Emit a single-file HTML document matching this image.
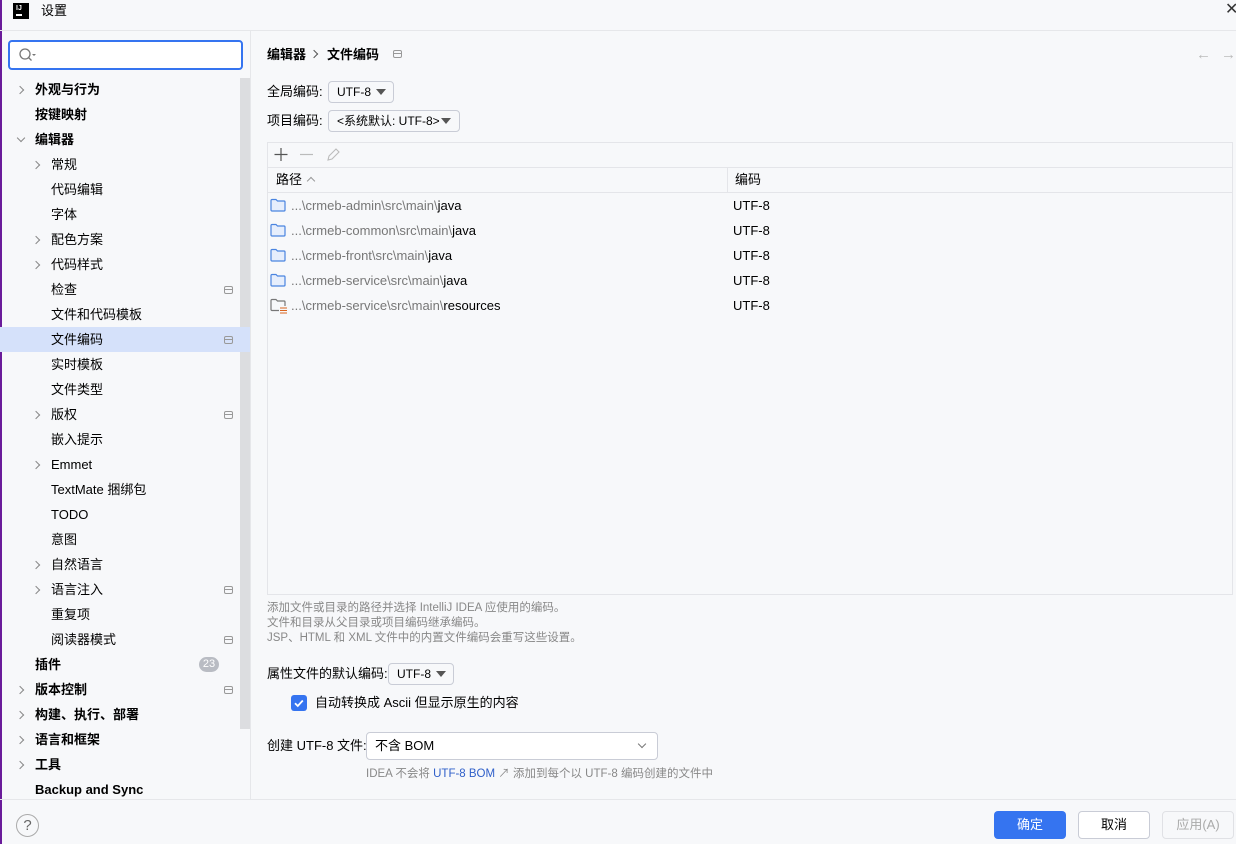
<!DOCTYPE html><html><head><meta charset="utf-8"><style>
*{box-sizing:border-box;margin:0;padding:0}
body{width:1236px;height:844px;background:#f7f8fa;font-family:"Liberation Sans","Noto Sans CJK SC",sans-serif;font-size:13px;color:#000;position:relative;overflow:hidden}
.a{position:absolute;white-space:nowrap;line-height:18px}
.b{font-weight:bold}
.chev{position:absolute;width:6px;height:6px;border-right:1.3px solid #888;border-bottom:1.3px solid #888}
.r{transform:rotate(-45deg)}
.d{transform:rotate(45deg)}
.pin{position:absolute;width:9px;height:8px;border:1px solid #999;border-radius:2px}
.pin:after{content:"";position:absolute;left:0;right:0;top:2px;border-top:1px solid #999}
.dd{position:absolute;height:22px;border:1px solid #c9ccd6;border-radius:4px;background:#f7f8fa;line-height:20px;padding-left:8px;font-size:12px}
.tri{position:absolute;width:0;height:0;border-left:5px solid transparent;border-right:5px solid transparent;border-top:6px solid #555;top:7px}
.g{color:#777}
.fo{position:absolute}
</style></head><body>
<div class="a" style="left:0;top:0;width:2px;height:844px;background:#6a1b9a"></div>
<div class="a" style="left:13px;top:3px;width:16px;height:16px;background:#000"><div style="position:absolute;left:3px;top:11px;width:6px;height:1.5px;background:#fff"></div><div style="position:absolute;left:3px;top:2px;color:#fff;font-size:7px;font-weight:bold;line-height:8px">IJ</div></div>
<div class="a" style="left:41px;top:2px;font-size:13px">设置</div>
<div class="a" style="left:1225px;top:1px;font-size:16px;color:#333">✕</div>
<div class="a" style="left:0;top:30px;width:1236px;height:1px;background:#e6e7ea"></div>
<div class="a" style="left:250px;top:30px;width:1px;height:769px;background:#e6e7ea"></div>
<div class="a" style="left:0;top:799px;width:1236px;height:1px;background:#e6e7ea"></div>
<div class="a" style="left:8px;top:40px;width:235px;height:30px;border:2px solid #3574f0;border-radius:4px;background:#fff"></div>
<svg class="a" style="left:18px;top:47px" width="20" height="16"><circle cx="7" cy="7" r="5" fill="none" stroke="#777" stroke-width="1.3"/><path d="M10.5 10.5l3 3" stroke="#777" stroke-width="1.3"/><path d="M14 7h4l-2 2z" fill="#777"/></svg>
<div class="a" style="left:240px;top:78px;width:10px;height:651px;background:#dcdde0"></div>
<div class="a" style="left:0;top:327px;background:#d5e1fa;width:250px;height:25px"></div>
<div class="chev r" style="left:17px;top:87px"></div><div class="a b" style="left:35px;top:81px">外观与行为</div>
<div class="a b" style="left:35px;top:106px">按键映射</div>
<div class="chev d" style="left:18px;top:135px"></div><div class="a b" style="left:35px;top:131px">编辑器</div>
<div class="chev r" style="left:33px;top:162px"></div><div class="a" style="left:51px;top:156px">常规</div>
<div class="a" style="left:51px;top:181px">代码编辑</div>
<div class="a" style="left:51px;top:206px">字体</div>
<div class="chev r" style="left:33px;top:237px"></div><div class="a" style="left:51px;top:231px">配色方案</div>
<div class="chev r" style="left:33px;top:262px"></div><div class="a" style="left:51px;top:256px">代码样式</div>
<div class="a" style="left:51px;top:281px">检查</div><div class="pin" style="left:224px;top:286px"></div>
<div class="a" style="left:51px;top:306px">文件和代码模板</div>
<div class="a" style="left:51px;top:331px">文件编码</div><div class="pin" style="left:224px;top:336px"></div>
<div class="a" style="left:51px;top:356px">实时模板</div>
<div class="a" style="left:51px;top:381px">文件类型</div>
<div class="chev r" style="left:33px;top:412px"></div><div class="a" style="left:51px;top:406px">版权</div><div class="pin" style="left:224px;top:411px"></div>
<div class="a" style="left:51px;top:431px">嵌入提示</div>
<div class="chev r" style="left:33px;top:462px"></div><div class="a" style="left:51px;top:456px">Emmet</div>
<div class="a" style="left:51px;top:481px">TextMate 捆绑包</div>
<div class="a" style="left:51px;top:506px">TODO</div>
<div class="a" style="left:51px;top:531px">意图</div>
<div class="chev r" style="left:33px;top:562px"></div><div class="a" style="left:51px;top:556px">自然语言</div>
<div class="chev r" style="left:33px;top:587px"></div><div class="a" style="left:51px;top:581px">语言注入</div><div class="pin" style="left:224px;top:586px"></div>
<div class="a" style="left:51px;top:606px">重复项</div>
<div class="a" style="left:51px;top:631px">阅读器模式</div><div class="pin" style="left:224px;top:636px"></div>
<div class="a b" style="left:35px;top:656px">插件</div><div class="a" style="left:199px;top:657px;width:20px;height:15px;border-radius:8px;background:#b9bcc3;color:#fff;font-size:11px;text-align:center;line-height:15px">23</div>
<div class="chev r" style="left:17px;top:687px"></div><div class="a b" style="left:35px;top:681px">版本控制</div><div class="pin" style="left:224px;top:686px"></div>
<div class="chev r" style="left:17px;top:712px"></div><div class="a b" style="left:35px;top:706px">构建、执行、部署</div>
<div class="chev r" style="left:17px;top:737px"></div><div class="a b" style="left:35px;top:731px">语言和框架</div>
<div class="chev r" style="left:17px;top:762px"></div><div class="a b" style="left:35px;top:756px">工具</div>
<div class="a b" style="left:35px;top:781px">Backup and Sync</div>
<div class="a" style="left:16px;top:814px;width:23px;height:23px;border:1px solid #aaa;border-radius:50%;text-align:center;line-height:21px;color:#666;font-size:15px">?</div>
<div class="a b" style="left:267px;top:46px">编辑器</div>
<div class="chev r" style="left:311px;top:51px;border-color:#555"></div>
<div class="a b" style="left:327px;top:46px">文件编码</div>
<div class="pin" style="left:393px;top:50px"></div>
<div class="a" style="left:1196px;top:46px;color:#bbb;font-size:15px">←</div>
<div class="a" style="left:1221px;top:46px;color:#bbb;font-size:15px">→</div>
<div class="a" style="left:267px;top:83px">全局编码:</div>
<div class="dd" style="left:328px;top:81px;width:66px">UTF-8<div class="tri" style="left:47px"></div></div>
<div class="a" style="left:267px;top:112px">项目编码:</div>
<div class="dd" style="left:328px;top:110px;width:132px">&lt;系统默认: UTF-8&gt;<div class="tri" style="left:112px"></div></div>
<div class="a" style="left:267px;top:142px;width:966px;height:453px;border:1px solid #e4e5e9"></div>
<div class="a" style="left:268px;top:167px;width:964px;height:1px;background:#e4e5e9"></div>
<div class="a" style="left:268px;top:192px;width:964px;height:1px;background:#e4e5e9"></div>
<div class="a" style="left:727px;top:168px;width:1px;height:24px;background:#e4e5e9"></div>
<svg class="a" style="left:273px;top:147px" width="70" height="16"><path d="M8 1v13M1.5 7.5h13" stroke="#555" stroke-width="1.2"/><path d="M27 7.5h13" stroke="#bbb" stroke-width="1.2"/><path d="M55 13l1-4 7-7 3 3-7 7z" fill="none" stroke="#bbb" stroke-width="1.1"/></svg>
<div class="a" style="left:276px;top:171px">路径</div>
<div class="chev" style="left:308px;top:178px;transform:rotate(-135deg);border-color:#999"></div>
<div class="a" style="left:735px;top:171px">编码</div>
<svg class="fo" style="left:270px;top:198px" width="16" height="14"><path d="M1 2.5a1 1 0 0 1 1-1h4l1.5 1.5h6.5a1 1 0 0 1 1 1v8a1 1 0 0 1-1 1h-12a1 1 0 0 1-1-1z" fill="#e6eefc" stroke="#4a84e0" stroke-width="1.2"/></svg><div class="a" style="left:291px;top:197px"><span class="g">...\crmeb-admin\src\main\</span>java</div><div class="a" style="left:733px;top:197px">UTF-8</div>
<svg class="fo" style="left:270px;top:223px" width="16" height="14"><path d="M1 2.5a1 1 0 0 1 1-1h4l1.5 1.5h6.5a1 1 0 0 1 1 1v8a1 1 0 0 1-1 1h-12a1 1 0 0 1-1-1z" fill="#e6eefc" stroke="#4a84e0" stroke-width="1.2"/></svg><div class="a" style="left:291px;top:222px"><span class="g">...\crmeb-common\src\main\</span>java</div><div class="a" style="left:733px;top:222px">UTF-8</div>
<svg class="fo" style="left:270px;top:248px" width="16" height="14"><path d="M1 2.5a1 1 0 0 1 1-1h4l1.5 1.5h6.5a1 1 0 0 1 1 1v8a1 1 0 0 1-1 1h-12a1 1 0 0 1-1-1z" fill="#e6eefc" stroke="#4a84e0" stroke-width="1.2"/></svg><div class="a" style="left:291px;top:247px"><span class="g">...\crmeb-front\src\main\</span>java</div><div class="a" style="left:733px;top:247px">UTF-8</div>
<svg class="fo" style="left:270px;top:273px" width="16" height="14"><path d="M1 2.5a1 1 0 0 1 1-1h4l1.5 1.5h6.5a1 1 0 0 1 1 1v8a1 1 0 0 1-1 1h-12a1 1 0 0 1-1-1z" fill="#e6eefc" stroke="#4a84e0" stroke-width="1.2"/></svg><div class="a" style="left:291px;top:272px"><span class="g">...\crmeb-service\src\main\</span>java</div><div class="a" style="left:733px;top:272px">UTF-8</div>
<svg class="fo" style="left:270px;top:298px" width="18" height="16"><path d="M9 12.5h-7a1 1 0 0 1-1-1v-9a1 1 0 0 1 1-1h4l1.5 1.5h6.5a1 1 0 0 1 1 1v4" fill="none" stroke="#777" stroke-width="1.2"/><path d="M10 10h7M10 12.5h7M10 15h7" stroke="#d9641e" stroke-width="1"/></svg><div class="a" style="left:291px;top:297px"><span class="g">...\crmeb-service\src\main\</span>resources</div><div class="a" style="left:733px;top:297px">UTF-8</div>
<div class="a" style="left:267px;top:601px;font-size:11.5px;color:#888;line-height:15px">添加文件或目录的路径并选择 IntelliJ IDEA 应使用的编码。<br>文件和目录从父目录或项目编码继承编码。<br>JSP、HTML 和 XML 文件中的内置文件编码会重写这些设置。</div>
<div class="a" style="left:267px;top:665px">属性文件的默认编码:</div>
<div class="dd" style="left:388px;top:663px;width:66px">UTF-8<div class="tri" style="left:47px"></div></div>
<div class="a" style="left:291px;top:695px;width:16px;height:16px;background:#3574f0;border-radius:3px"><svg width="16" height="16"><path d="M4 8.2l2.8 2.8 5-5.5" fill="none" stroke="#fff" stroke-width="1.8"/></svg></div>
<div class="a" style="left:315px;top:694px">自动转换成 Ascii 但显示原生的内容</div>
<div class="a" style="left:267px;top:737px">创建 UTF-8 文件:</div>
<div class="a" style="left:366px;top:732px;width:292px;height:28px;border:1px solid #c9ccd6;border-radius:4px;background:#fff;padding-left:8px;line-height:26px">不含 BOM</div>
<div class="chev d" style="left:639px;top:741px;border-color:#777"></div>
<div class="a" style="left:366px;top:765px;font-size:11.5px;color:#888">IDEA 不会将 <span style="color:#2f5fc9">UTF-8 BOM</span> ↗ 添加到每个以 UTF-8 编码创建的文件中</div>
<div class="a" style="left:994px;top:811px;width:72px;height:28px;background:#3574f0;border-radius:4px;color:#fff;text-align:center;line-height:28px">确定</div>
<div class="a" style="left:1078px;top:811px;width:72px;height:28px;border:1px solid #c9ccd6;background:#fff;border-radius:4px;text-align:center;line-height:26px">取消</div>
<div class="a" style="left:1162px;top:811px;width:72px;height:28px;border:1px solid #e0e1e5;border-radius:4px;text-align:center;line-height:26px;color:#aaa">应用(A)</div>
</body></html>
